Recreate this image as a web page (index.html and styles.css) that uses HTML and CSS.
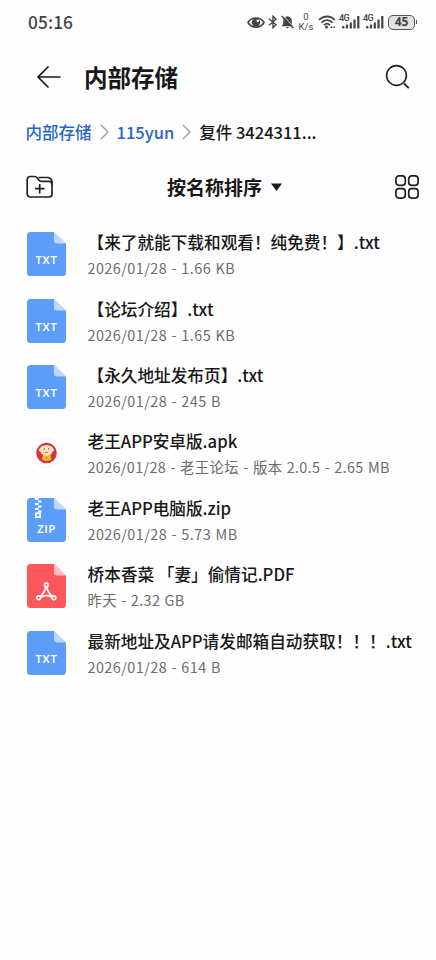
FILE: index.html
```html
<!DOCTYPE html>
<html lang="zh-CN">
<head>
<meta charset="utf-8">
<meta name="viewport" content="width=device-width, initial-scale=1">
<title>内部存储</title>
<link rel="stylesheet" href="styles.css">
</head>
<body>
<svg class="defs" width="0" height="0" aria-hidden="true">
  <symbol id="sheet" viewBox="0 0 39 44">
    <path d="M3.500 0H27L39 11.500V40.500a3.500 3.500 0 0 1-3.500 3.500H3.500a3.500 3.500 0 0 1-3.500-3.500V3.500a3.500 3.500 0 0 1 3.500-3.500Z" fill="currentColor"/>
    <path d="M27 0 39 11.500H30a3 3 0 0 1-3-3Z" fill="#fff" fill-opacity=".6"/>
  </symbol>
  <symbol id="signal" viewBox="0 0 22 16">
    <path d="M4.300 12v2.500M8 10.500v4M11.800 8.500v6M15.500 5.500v9M19.300 2v12.500" stroke="#444" stroke-width="2.200"/>
  </symbol>
</svg>
<header class="status">
  <span class="clock">05:16</span>
  <div class="indicators">
    <svg class="eye" width="18" height="13" viewBox="0 0 18 13"><path d="M1 6.500C4.500.4 13.500.4 17 6.500 13.500 12.600 4.500 12.600 1 6.500Z" fill="none" stroke="#444" stroke-width="1.600"/><circle cx="9" cy="6.500" r="4.200" fill="#444"/><circle cx="10.800" cy="4.800" r="1.300" fill="#fff"/></svg>
    <svg class="bt" width="10" height="14" viewBox="0 0 10 14"><path d="m1 3.800 7 6L5 12.700V1.300l3 2.900-7 6" fill="none" stroke="#444" stroke-width="1.400"/></svg>
    <svg class="bell" width="13" height="14" viewBox="0 0 13 14"><path d="M.8 11.200 2.200 9V6C2.200 3.300 4.200 1.500 6.500 1.200 9 1.500 10.800 3.300 10.800 6v3l1.400 2.200ZM5 12h3l-1.500 1.500Z" fill="#444"/><path d="m1.900.3 11 12" stroke="#fff" stroke-width=".8"/><path d="m.7 1 11.500 12" stroke="#444" stroke-width="1.400"/></svg>
    <span class="speed"><span>0</span><span>K/s</span></span>
    <svg class="wifi" width="18" height="14" viewBox="0 0 18 14"><g fill="none" stroke="#444" stroke-width="1.800"><path d="M1 5C5.500.300 12.500.300 17 5M3.500 7.700C6.800 4.300 11.200 4.300 14.500 7.700M6 10.200c2-2 4-2 6 0"/></g><circle cx="8.500" cy="12" r="1.500" fill="#444"/><path d="M12.500 12.300h1.800m1 0h1.800" stroke="#444" stroke-width="1.600"/></svg>
    <span class="cell"><svg width="22" height="16"><use href="#signal"/></svg><span>4G</span></span>
    <span class="cell"><svg width="22" height="16"><use href="#signal"/></svg><span>4G</span></span>
    <span class="battery">45</span>
  </div>
</header>
<div class="titlebar">
  <svg class="back" width="26" height="24" viewBox="0 0 26 24"><path d="M24.500 12H2M12.500 1.500 2 12l10.500 10.500" fill="none" stroke="#181818" stroke-width="1.700"/></svg>
  <h1>内部存储</h1>
  <svg class="search" width="26" height="26" viewBox="0 0 26 26"><circle cx="11.500" cy="11.500" r="9.900" fill="none" stroke="#222" stroke-width="1.600"/><path d="m19 19.500 4.800 4.600" stroke="#222" stroke-width="1.800"/></svg>
</div>
<nav class="crumbs">
  <a>内部存储</a>
  <svg width="9" height="16" viewBox="0 0 9 16"><path d="m1 1 7 7-7 7" fill="none" stroke="#999" stroke-width="1.300"/></svg>
  <a>115yun</a>
  <svg width="9" height="16" viewBox="0 0 9 16"><path d="m1 1 7 7-7 7" fill="none" stroke="#999" stroke-width="1.300"/></svg>
  <span class="current">复件 3424311...</span>
</nav>
<div class="toolbar">
  <svg width="28" height="24" viewBox="0 0 28 24"><g fill="none" stroke="#202020" stroke-width="1.700"><path d="M1.200 19V4.500a3 3 0 0 1 3-3h4.600c1 0 1.700.4 2.300 1.200L13 5.200c.600.800 1.200 1.100 2.200 1.100H23a3 3 0 0 1 3 3V19a3 3 0 0 1-3 3H4.200a3 3 0 0 1-3-3Z"/><path d="M12.500 2.500h9.200c2 0 3.600 1.200 4.200 3.200l.1 4M13.700 9v9.500M9 13.700h9.500"/></g></svg>
  <span class="sort">按名称排序<svg width="11" height="8" viewBox="0 0 11 8"><path d="M0 .5h11L5.500 8Z" fill="#1a1a1a"/></svg></span>
  <svg width="24" height="24" viewBox="0 0 24 24"><g fill="none" stroke="#202020" stroke-width="1.700"><rect x=".9" y=".9" width="9.400" height="9.400" rx="3"/><rect x="13.700" y=".9" width="9.400" height="9.400" rx="3"/><rect x=".9" y="13.700" width="9.400" height="9.400" rx="3"/><rect x="13.700" y="13.700" width="9.400" height="9.400" rx="3"/></g></svg>
</div>
<main class="files">
  <article class="file"><div class="icon blue"><svg width="39" height="44"><use href="#sheet"/></svg><b>TXT</b></div><div class="info"><h2>【来了就能下载和观看！纯免费！】.txt</h2><p>2026/01/28 - 1.66 KB</p></div></article>
  <article class="file"><div class="icon blue"><svg width="39" height="44"><use href="#sheet"/></svg><b>TXT</b></div><div class="info"><h2>【论坛介绍】.txt</h2><p>2026/01/28 - 1.65 KB</p></div></article>
  <article class="file"><div class="icon blue"><svg width="39" height="44"><use href="#sheet"/></svg><b>TXT</b></div><div class="info"><h2>【永久地址发布页】.txt</h2><p>2026/01/28 - 245 B</p></div></article>
  <article class="file"><div class="icon"><svg width="39" height="44" viewBox="0 0 39 44"><circle cx="19.500" cy="22" r="14.500" fill="#fff" stroke="#f3f3f3"/><circle cx="19.500" cy="22" r="10.300" fill="#da3046"/><path d="M16 24h7.500l1 4.500q-5 3-9.500 0Z" fill="#f4bd20"/><path d="M14 15.500q5.500-3 11 0l1 2.500-1.500 5q-5 3.500-10 0L13 18Z" fill="#f6e3bb"/><circle cx="13.500" cy="19" r="1.700" fill="#f6e3bb"/><circle cx="25.500" cy="19" r="1.700" fill="#f6e3bb"/><circle cx="17.300" cy="18" r=".7" fill="#7c4938"/><circle cx="21.700" cy="18" r=".7" fill="#7c4938"/><path d="M18 21.500h3M19.500 26v2" stroke="#c05a38" stroke-width=".8"/></svg></div><div class="info"><h2>老王APP安卓版.apk</h2><p class="mixed">2026/01/28 - 老王论坛 - 版本 2.0.5 - 2.65 MB</p></div></article>
  <article class="file"><div class="icon blue"><svg width="39" height="44" viewBox="0 0 39 44"><use href="#sheet"/><path d="M8 1h3.500M11 3.500h3.500M8 6h3.500M11 8.500h3.500M8 11h3.500M11 13.500h3.500" stroke="#fff" stroke-width="1.800"/><path d="M8.900 15.400h4.200v3.700H8.900Z" fill="none" stroke="#fff" stroke-width="1.700"/></svg><b class="low">ZIP</b></div><div class="info"><h2>老王APP电脑版.zip</h2><p>2026/01/28 - 5.73 MB</p></div></article>
  <article class="file"><div class="icon red"><svg width="39" height="44" viewBox="0 0 39 44"><use href="#sheet"/><g fill="none" stroke="#fff" stroke-width="1.600"><circle cx="19.300" cy="21" r="1.900"/><circle cx="11.700" cy="33.800" r="1.900"/><circle cx="26.900" cy="33.800" r="1.900"/><path d="M18.800 23q-1 5.400-5.500 9.400M19.800 23q1 5.400 5.500 9.400M13.700 33.200q5.600-3.500 11.200 0"/></g></svg></div><div class="info"><h2>桥本香菜 「妻」偷情记.PDF</h2><p class="mixed">昨天 - 2.32 GB</p></div></article>
  <article class="file"><div class="icon blue"><svg width="39" height="44"><use href="#sheet"/></svg><b>TXT</b></div><div class="info"><h2>最新地址及APP请发邮箱自动获取！！！.txt</h2><p>2026/01/28 - 614 B</p></div></article>
</main>
</body>
</html>
```
FILE: styles.css
```css
* { box-sizing: border-box; }
body {
  margin: 0;
  width: 436px;
  height: 960px;
  overflow: hidden;
  background: #fefefe;
  color: #181818;
  font-family: "Noto Sans CJK SC", "Noto Sans", sans-serif;
}
h1, h2, p { margin: 0; }
svg { display: block; flex: none; }
.defs { position: absolute; }
.status { height: 44px; display: flex; align-items: center; justify-content: space-between; padding: 0 21px 0 28px; color: #444; }
.clock { font: 500 17.3px/20px "Noto Sans CJK SC", sans-serif; letter-spacing: .1px; }
.indicators { display: flex; align-items: center; }
.eye { margin-right: 3px; }
.bt { margin-right: 3px; }
.bell { margin-right: 4px; }
.speed { width: 16px; margin-right: 4px; display: flex; flex-direction: column; align-items: center; font: 9.5px/10px Roboto, sans-serif; }
.speed span { height: 10px; }
.wifi { margin-right: 3px; }
.cell { position: relative; margin-right: 2px; }
.cell span { position: absolute; left: 0; top: -1px; font: 500 9px/10px Roboto, sans-serif; letter-spacing: -.6px; }
.battery { position: relative; width: 27px; height: 15px; margin-left: 1px; border: 1.5px solid #555; border-radius: 5px; background: #e3e3e3; text-align: center; font: 700 12px/12px "Open Sans", sans-serif; }
.battery::after { content: ""; position: absolute; right: -3px; top: 4px; width: 1px; height: 4px; background: #555; }
.titlebar { height: 66px; display: flex; align-items: center; padding: 0 25px 0 36px; }
h1 { margin-left: 22px; font-size: 23.5px; line-height: 34px; font-weight: 700; }
.search { margin-left: auto; }
.crumbs { height: 44px; display: flex; align-items: center; padding-left: 25.5px; font-size: 16.5px; line-height: 24px; font-weight: 500; }
.crumbs a { color: #2666c5; }
.crumbs svg { margin: 0 8px; }
.toolbar { height: 66px; display: flex; align-items: center; justify-content: space-between; padding: 0 17px 0 26px; }
.sort { display: flex; align-items: center; gap: 9px; font-size: 19px; line-height: 28px; font-weight: 700; }
.files { padding: 1px 0 0 27px; }
.file { height: 66.4px; display: flex; align-items: center; }
.icon { position: relative; width: 39px; height: 44px; flex: none; }
.icon b { position: absolute; left: 0; right: 0; top: 20px; text-align: center; color: #fff; font: 700 10.5px/16px Lato, sans-serif; letter-spacing: .8px; }
.icon .low { top: 23px; }
.blue { color: #5c9dfa; }
.red { color: #fb585b; }
.info { margin-left: 21.5px; padding-top: 2px; white-space: nowrap; }
h2 { font-size: 16.65px; line-height: 26px; font-weight: 500; }
p { font-size: 14.4px; line-height: 26px; letter-spacing: .45px; word-spacing: .7px; color: #6c6c6c; }
.mixed { letter-spacing: .35px; }
```
